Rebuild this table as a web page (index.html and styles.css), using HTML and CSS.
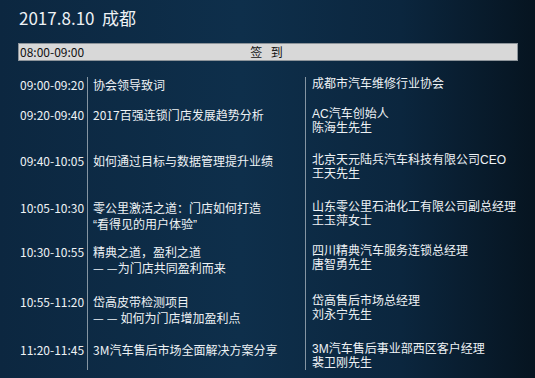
FILE: index.html
```html
<!DOCTYPE html>
<html lang="zh-CN">
<head>
  <meta charset="UTF-8">
  <meta name="viewport" content="width=device-width, initial-scale=1.0">
  <title>2017.8.10 成都 议程</title>
  <link rel="stylesheet" href="styles.css">
</head>
<body>

  <div class="agenda">
    <div class="title">2017.8.10&nbsp;&nbsp;成都</div>

    <div class="bar">
      <span class="bar-time">08:00-09:00</span>
      <span class="bar-label">签 到</span>
    </div>

    <div class="schedule">
      <div class="row r1">
        <div class="time">09:00-09:20</div>
        <div class="topic">协会领导致词</div>
        <div class="speaker">成都市汽车维修行业协会</div>
      </div>
      <div class="row r2">
        <div class="time">09:20-09:40</div>
        <div class="topic">2017百强连锁门店发展趋势分析</div>
        <div class="speaker">AC汽车创始人<br>陈海生先生</div>
      </div>
      <div class="row r3">
        <div class="time">09:40-10:05</div>
        <div class="topic">如何通过目标与数据管理提升业绩</div>
        <div class="speaker">北京天元陆兵汽车科技有限公司CEO<br>王天先生</div>
      </div>
      <div class="row r4">
        <div class="time">10:05-10:30</div>
        <div class="topic">零公里激活之道：门店如何打造<br><span class="quote">“</span>看得见的用户体验<span class="quote">”</span></div>
        <div class="speaker">山东零公里石油化工有限公司副总经理<br>王玉萍女士</div>
      </div>
      <div class="row r5">
        <div class="time">10:30-10:55</div>
        <div class="topic">精典之道，盈利之道<br><span class="dash">—</span> <span class="dash">—</span>为门店共同盈利而来</div>
        <div class="speaker">四川精典汽车服务连锁总经理<br>唐智勇先生</div>
      </div>
      <div class="row r6">
        <div class="time">10:55-11:20</div>
        <div class="topic">岱高皮带检测项目<br><span class="dash">—</span> <span class="dash">—</span> 如何为门店增加盈利点</div>
        <div class="speaker">岱高售后市场总经理<br>刘永宁先生</div>
      </div>
      <div class="row r7">
        <div class="time">11:20-11:45</div>
        <div class="topic">3M汽车售后市场全面解决方案分享</div>
        <div class="speaker">3M汽车售后事业部西区客户经理<br>裴卫刚先生</div>
      </div>
    </div>
  </div>

</body>
</html>
```

FILE: styles.css
```css
body, html {
  margin: 0;
  padding: 0;
  height: 100%;
  overflow: hidden;
  font-family: "Noto Sans CJK SC", "Noto Sans", sans-serif;
  color: #eef2f5;
  background: linear-gradient(90deg, #0c2740 0%, #0e2f4b 45%, #0b263e 75%, #061420 100%);
}

.agenda {
  padding: 6px 17px 0 18px;
}

.title {
  font-size: 17px;
  line-height: 24px;
  padding-left: 1px;
  margin-bottom: 13px;
}

.bar {
  display: grid;
  grid-template-columns: 1fr auto 1fr;
  align-items: center;
  height: 16px;
  background-color: #d8d8d8;
  border: 1px solid #8d949a;
  color: #111;
  font-size: 12px;
  line-height: 16px;
}

.bar-time {
  padding-left: 1px;
}

.bar-label {
  letter-spacing: 3px;
}

.schedule {
  margin-top: 16px;
  font-size: 12px;
}

.row {
  display: grid;
  grid-template-columns: 69px 218px 1fr;
}

.time {
  padding-left: 2px;
  line-height: 15px;
}

.topic {
  border-left: 1px solid #8595a2;
  padding-left: 5px;
  line-height: 16px;
}

.topic .quote {
  font-family: "Liberation Sans", sans-serif;
}

.topic .dash {
  display: inline-block;
  width: 11px;
  overflow: hidden;
  vertical-align: top;
}

.speaker {
  border-left: 1px solid #8595a2;
  padding-left: 6px;
  font-family: "Liberation Sans", "Noto Sans CJK SC", sans-serif;
  line-height: 14px;
}

.r1 { height: 30px; }
.r2 { height: 46px; }
.r3 { height: 47px; }
.r4 { height: 44px; }
.r5 { height: 50px; }
.r6 { height: 48px; }
.r7 { height: 25px; }
```
